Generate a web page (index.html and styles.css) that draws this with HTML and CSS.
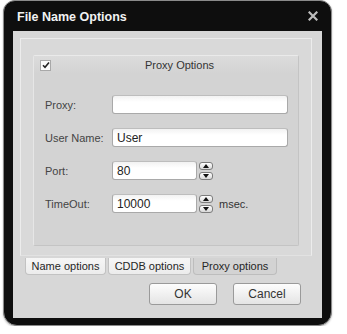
FILE: index.html
```html
<!DOCTYPE html>
<html lang="en">
<head>
    <meta charset="UTF-8">
    <title>File Name Options</title>
    <link rel="stylesheet" href="styles.css">
</head>
<body>
    <div class="window">
        <div class="titlebar">
            <span class="title">File Name Options</span>
            <svg class="close" width="10" height="10" viewBox="0 0 10 10">
                <path d="M1.5 1.5 L8.5 8.5 M8.5 1.5 L1.5 8.5" stroke="#bdbdbd" stroke-width="2.2" stroke-linecap="square"/>
            </svg>
        </div>

        <div class="content">
            <div class="pane">
                <div class="group">
                    <div class="group-head">
                        <span class="check">
                            <svg width="8" height="8" viewBox="0 0 8 8">
                                <path d="M1 4.2 L3 6.2 L7 1.5" fill="none" stroke="#222" stroke-width="1.6"/>
                            </svg>
                        </span>
                        <span class="group-title">Proxy Options</span>
                    </div>

                    <div class="fields">
                        <label>Proxy:</label>
                        <div class="field"><input class="text wide" type="text" value=""></div>

                        <label>User Name:</label>
                        <div class="field"><input class="text wide" type="text" value="User"></div>

                        <label>Port:</label>
                        <div class="field">
                            <input class="text short" type="text" value="80">
                            <div class="spin">
                                <span class="spin-btn up"></span>
                                <span class="spin-btn down"></span>
                            </div>
                        </div>

                        <label>TimeOut:</label>
                        <div class="field">
                            <input class="text short" type="text" value="10000">
                            <div class="spin">
                                <span class="spin-btn up"></span>
                                <span class="spin-btn down"></span>
                            </div>
                            <span class="unit">msec.</span>
                        </div>
                    </div>
                </div>
            </div>

            <div class="tabs">
                <span class="tab t-name">Name options</span>
                <span class="tab t-cddb">CDDB options</span>
                <span class="tab t-proxy active">Proxy options</span>
            </div>

            <div class="buttons">
                <button class="btn">OK</button>
                <button class="btn">Cancel</button>
            </div>
        </div>
    </div>
</body>
</html>
```

FILE: styles.css
```css
body {
    margin: 0;
    background: #ffffff;
    font-family: 'Liberation Sans', Arial, sans-serif;
}
.window {
    margin-left: 3px;
    width: 329px;
    height: 326px;
    box-sizing: border-box;
    border: 1px solid #8a8a8a;
    border-radius: 12px 12px 14px 14px;
    background: #0e0e0e;
    padding: 0 9px 7px 9px;
    display: flex;
    flex-direction: column;
    box-shadow: 0 1px 2px rgba(0,0,0,0.25);
}
.titlebar {
    height: 30px;
    display: flex;
    align-items: center;
    justify-content: space-between;
    padding: 0 4px 0 4px;
}
.title {
    color: #f2f2f2;
    font-size: 12.5px;
    font-weight: bold;
    margin-top: 2px;
}
.content {
    flex: 1;
    background: #d7d7d7;
    display: flex;
    flex-direction: column;
    padding-top: 7px;
}
.pane {
    margin: 0 10px 0 7px;
    height: 218px;
    box-sizing: border-box;
    border: 1px solid #ececec;
    border-bottom-color: #e2e2e2;
    background: #d9d9d9;
    padding: 16px 12px 9px 12px;
    display: flex;
}
.group {
    flex: 1;
    border: 1px solid #c4c4c4;
    border-top-color: #eaeaea;
    border-left-color: #e6e6e6;
    border-radius: 2px;
    background: #d3d3d3;
}
.group-head {
    height: 18px;
    display: flex;
    align-items: center;
    padding-left: 6px;
    background: linear-gradient(#dcdcdc, #d3d3d3);
}
.check {
    width: 9px;
    height: 9px;
    background: #fafafa;
    border: 1px solid #a8a8a8;
    display: flex;
    align-items: center;
    justify-content: center;
}
.group-title {
    flex: 1;
    text-align: center;
    font-size: 11px;
    color: #333;
    margin-left: 10px;
}
.fields {
    display: grid;
    grid-template-columns: 67px auto;
    grid-auto-rows: 19px;
    row-gap: 14px;
    padding: 21px 0 0 11px;
    align-items: center;
}
.fields label {
    font-size: 11px;
    color: #444;
}
.field {
    display: flex;
    align-items: center;
    height: 19px;
}
.text {
    box-sizing: border-box;
    height: 19px;
    border: 1px solid #a9a9a9;
    border-top-color: #bdbdbd;
    border-radius: 3px;
    background: linear-gradient(#f2f2f2, #ffffff 35%);
    padding: 1px 4px 0 4px;
    font-family: 'Liberation Sans', Arial, sans-serif;
    font-size: 12px;
    color: #222;
    outline: none;
}
.wide {
    width: 176px;
}
.short {
    width: 85px;
}
.spin {
    display: flex;
    flex-direction: column;
    gap: 2px;
    margin-left: 2px;
}
.spin-btn {
    width: 12px;
    height: 6px;
    border: 1px solid #7c7c7c;
    border-radius: 3px;
    background: linear-gradient(#ffffff, #d8d8d8);
    position: relative;
}
.spin-btn::after {
    content: "";
    position: absolute;
    left: 3px;
    border-left: 3px solid transparent;
    border-right: 3px solid transparent;
}
.spin-btn.up::after {
    top: 1px;
    border-bottom: 4px solid #111;
}
.spin-btn.down::after {
    top: 1px;
    border-top: 4px solid #111;
}
.unit {
    margin-left: 6px;
    font-size: 11px;
    color: #333;
}
.tabs {
    display: flex;
    margin: 2px 0 0 12px;
    gap: 2px;
}
.tab {
    height: 17px;
    box-sizing: border-box;
    display: flex;
    align-items: center;
    justify-content: center;
    font-size: 11px;
    color: #262626;
    border: 1px solid #c2c2c2;
    border-top: none;
    border-radius: 0 0 4px 4px;
    background: linear-gradient(#f6f6f6, #ececec);
}
.tab.active {
    background: #d3d3d3;
    border-color: #bdbdbd;
}
.t-name { width: 81px; }
.t-cddb { width: 83px; }
.t-proxy { width: 84px; }
.buttons {
    display: flex;
    justify-content: flex-end;
    gap: 16px;
    margin-top: 8px;
    padding-right: 21px;
}
.btn {
    width: 68px;
    height: 22px;
    border: 1px solid #9a9a9a;
    border-radius: 3px;
    background: linear-gradient(#fdfdfd, #e4e4e4);
    font-family: 'Liberation Sans', Arial, sans-serif;
    font-size: 12px;
    color: #333;
    padding: 0;
}
```
